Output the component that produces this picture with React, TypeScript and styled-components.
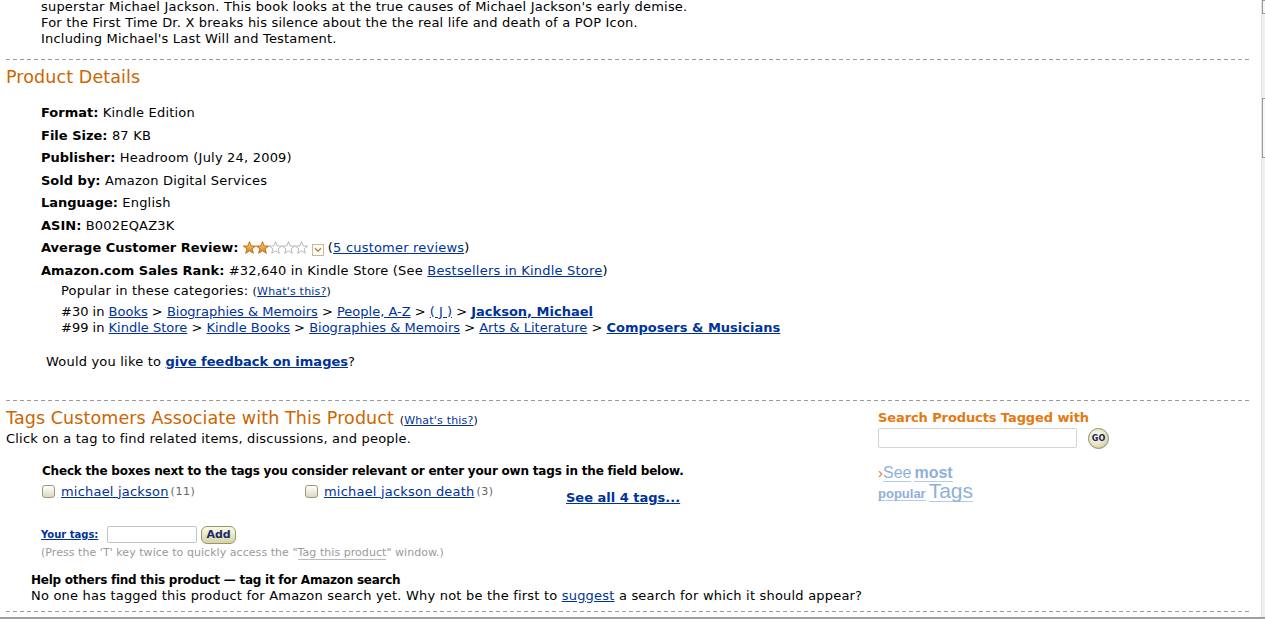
import React from "react";
import styled, { createGlobalStyle } from "styled-components";

const GlobalStyle = createGlobalStyle`
  html, body {
    margin: 0;
    padding: 0;
    background: #fff;
  }
  body {
    font-family: "DejaVu Sans", Verdana, sans-serif;
    font-size: 13px;
    letter-spacing: 0.2px;
    color: #000;
    overflow: hidden;
  }
`;

const LINK = "#003399";

const Page = styled.div`
  padding: 0 14px 0 6px;
`;

const Description = styled.div`
  margin-top: -1px;
  padding-left: 35px;
  line-height: 16px;
`;

const Divider = styled.div<{ $top: number; $bottom: number }>`
  height: 1px;
  margin: ${(p) => p.$top}px 0 ${(p) => p.$bottom}px;
  background-image: repeating-linear-gradient(
    to right,
    #9a9a9a 0 4px,
    transparent 4px 7px
  );
`;

const Heading = styled.h2<{ $top?: number }>`
  margin: ${(p) => p.$top ?? 0}px 0 0;
  font-size: 17.5px;
  line-height: 20px;
  letter-spacing: 0.1px;
  font-weight: normal;
  color: #cc6600;
`;

const Tiny = styled.span`
  font-size: 11px;
  letter-spacing: 0.2px;
  color: #000;
`;

const Link = styled.a<{ $bold?: boolean }>`
  color: ${LINK};
  text-decoration: underline;
  font-weight: ${(p) => (p.$bold ? "bold" : "normal")};
  letter-spacing: ${(p) => (p.$bold ? "0" : "inherit")};
  cursor: pointer;
`;

const Label = styled.b`
  letter-spacing: 0;
`;

const DetailList = styled.ul`
  list-style: none;
  margin: 18px 0 0;
  padding: 0 0 0 35px;
  line-height: 16px;
`;

const DetailItem = styled.li`
  margin-bottom: 6.5px;
`;

const Popular = styled.div`
  margin: 4px 0 0 20px;
`;

const CategoryList = styled.div`
  margin-top: 4px;
  letter-spacing: 0;
`;

const Stars = styled.svg`
  vertical-align: -2px;
  margin-right: 4px;
`;

const DropBox = styled.span`
  display: inline-flex;
  align-items: center;
  justify-content: center;
  width: 10px;
  height: 10px;
  border: 1px solid #c8b89a;
  vertical-align: -1px;
  margin-right: 4px;
  background: #fff;
`;

const Feedback = styled.p`
  margin: 18px 0 0;
  padding-left: 40px;
  line-height: 16px;
`;

const TagsSection = styled.div`
  display: grid;
  grid-template-columns: 872px 1fr;
`;

const Intro = styled.div`
  line-height: 16px;
`;

const CheckTitle = styled.div`
  margin: 16px 0 0 36px;
  font-size: 12px;
  font-weight: bold;
  letter-spacing: -0.2px;
  line-height: 16px;
`;

const TagGrid = styled.div`
  display: grid;
  grid-template-columns: 263px 261px auto;
  margin: 5px 0 0 36px;
  line-height: 16px;
`;

const TagCell = styled.label`
  display: flex;
  align-items: center;
  gap: 6px;
  height: 16px;
`;

const Box = styled.input`
  appearance: none;
  margin: 0;
  width: 13px;
  height: 13px;
  border: 1px solid #9c9a78;
  border-radius: 3px;
  background: linear-gradient(#ffffff, #dcd9bf);
  box-sizing: border-box;
`;

const Count = styled.span`
  font-size: 11px;
  letter-spacing: 0.5px;
  color: #666;
  margin-left: -4px;
`;

const SeeAll = styled(Link)`
  font-size: 13px;
  padding-top: 6px;
  display: inline-block;
`;

const YourTags = styled.div`
  display: flex;
  align-items: center;
  gap: 8px;
  margin: 20px 0 0 35px;
  height: 18px;
`;

const SmallLink = styled(Link)`
  font-size: 10px;
  font-weight: bold;
  letter-spacing: 0;
`;

const TagInput = styled.input`
  width: 90px;
  height: 17px;
  box-sizing: border-box;
  border: 1px solid #c3c3c3;
  border-radius: 2px;
  margin: 0 -4px 0 1px;
  padding: 0;
`;

const PillButton = styled.button`
  height: 18px;
  padding: 0 4px;
  border: 1px solid #98966c;
  border-radius: 6px;
  background: linear-gradient(#fbfbe6, #d6d3a6);
  font-family: "DejaVu Sans", Verdana, sans-serif;
  font-size: 11px;
  font-weight: bold;
  color: #1c2a6b;
  line-height: 14px;
`;

const Hint = styled.div`
  margin: 2px 0 0 35px;
  font-size: 11px;
  letter-spacing: 0.05px;
  line-height: 13px;
  color: #9a9a9a;
`;

const HintLink = styled.span`
  border-bottom: 1px solid #bbb;
`;

const Help = styled.div`
  margin: 14px 0 0 25px;
  line-height: 15px;
`;

const HelpTitle = styled.div`
  font-size: 12px;
  font-weight: bold;
  letter-spacing: -0.25px;
`;

const SearchCol = styled.div`
  padding-top: 8px;
`;

const SearchTitle = styled.div`
  font-size: 13px;
  line-height: 18px;
  font-weight: bold;
  letter-spacing: -0.1px;
  color: #e47911;
`;

const SearchRow = styled.div`
  display: flex;
  align-items: center;
  gap: 11px;
  margin-top: 1px;
`;

const SearchInput = styled.input`
  width: 199px;
  height: 20px;
  box-sizing: border-box;
  border: 1px solid #d4d4d4;
  border-radius: 2px;
  margin: 0;
`;

const GoButton = styled.button`
  width: 21px;
  height: 21px;
  padding: 0;
  border-radius: 50%;
  border: 1px solid #8c8a60;
  background: radial-gradient(circle at 40% 35%, #fdfdf0 0%, #e6e3c0 55%, #bdb98a 100%);
  font-family: "DejaVu Sans", Verdana, sans-serif;
  font-size: 8px;
  font-weight: bold;
  color: #14205a;
`;

const PopularTags = styled.a`
  display: block;
  margin-top: 15px;
  color: #8fb0dc;
  font-family: "Liberation Sans", Arial, sans-serif;
  letter-spacing: 0;
  text-decoration: none;
  cursor: pointer;
`;

const PTLine = styled.div<{ $shift?: number }>`
  display: flex;
  align-items: baseline;
  gap: 3px;
  height: 18px;
  margin-top: ${(p) => p.$shift ?? 0}px;
`;

const PTWord = styled.span<{ $size: number; $bold?: boolean }>`
  font-size: ${(p) => p.$size}px;
  font-weight: ${(p) => (p.$bold ? "bold" : "normal")};
  line-height: 1;
  border-bottom: 1px solid #b7cbe6;
`;

const Chevron = styled.span`
  color: #e47911;
  font-size: 15px;
  margin-right: -3px;
`;

const ScrollStrip = styled.div`
  position: fixed;
  top: 0;
  right: 0;
  width: 3px;
  height: 100%;
  background: #f0f0f0;
  border-left: 1px solid #e2e2e2;
`;

const ScrollThumb = styled.div<{ $top: number; $h: number }>`
  position: absolute;
  left: 0;
  top: ${(p) => p.$top}px;
  width: 3px;
  height: ${(p) => p.$h}px;
  border-left: 1px solid #9a9a9a;
  border-top: 1px solid #9a9a9a;
  border-bottom: 1px solid #9a9a9a;
  box-sizing: border-box;
  background: #f7f7f7;
`;

const BottomEdge = styled.div`
  position: fixed;
  left: 0;
  right: 0;
  bottom: 0;
  height: 2px;
  background: #a0a0a0;
`;

const STAR = "6.5,0.3 8.1,4.6 12.7,4.8 9.1,7.6 10.3,12 6.5,9.5 2.7,12 3.9,7.6 0.3,4.8 4.9,4.6";

const StarRating = ({ filled }: { filled: number }) => (
  <Stars width="65" height="13" viewBox="0 0 65 13">
    <defs>
      <linearGradient id="gold" x1="0" y1="0" x2="0" y2="1">
        <stop offset="0" stopColor="#fcd06a" />
        <stop offset="1" stopColor="#d9801b" />
      </linearGradient>
    </defs>
    {[0, 1, 2, 3, 4].map((i) => (
      <polygon
        key={i}
        points={STAR}
        transform={`translate(${i * 13} 0.3)`}
        fill={i < filled ? "url(#gold)" : "#fff"}
        stroke={i < filled ? "#b86a12" : "#b0b0b0"}
        strokeWidth="0.9"
        strokeLinejoin="round"
      />
    ))}
  </Stars>
);

const details: [string, React.ReactNode][] = [
  ["Format:", "Kindle Edition"],
  ["File Size:", "87 KB"],
  ["Publisher:", "Headroom (July 24, 2009)"],
  ["Sold by:", "Amazon Digital Services"],
  ["Language:", "English"],
  ["ASIN:", "B002EQAZ3K"],
];

export default function App() {
  return (
    <>
      <GlobalStyle />
      <Page>
        <Description>
          superstar Michael Jackson. This book looks at the true causes of Michael Jackson's early demise.
          <br />
          For the First Time Dr. X breaks his silence about the the real life and death of a POP Icon.
          <br />
          Including Michael's Last Will and Testament.
        </Description>

        <Divider $top={12} $bottom={7} />
        <Heading>Product Details</Heading>

        <DetailList>
          {details.map(([label, value]) => (
            <DetailItem key={label}>
              <Label>{label}</Label> {value}
            </DetailItem>
          ))}
          <DetailItem>
            <Label>Average Customer Review:</Label> <StarRating filled={2} />
            <DropBox>
              <svg width="8" height="6" viewBox="0 0 8 6">
                <path d="M1 1.2 L4 4.2 L7 1.2" fill="none" stroke="#d07a1a" strokeWidth="1.4" />
              </svg>
            </DropBox>
            (<Link>5 customer reviews</Link>)
          </DetailItem>
          <DetailItem>
            <Label>Amazon.com Sales Rank:</Label> #32,640 in Kindle Store (See <Link>Bestsellers in Kindle Store</Link>)
            <Popular>
              Popular in these categories: <Tiny>(<Link>What's this?</Link>)</Tiny>
              <CategoryList>
                #30 in <Link>Books</Link> &gt; <Link>Biographies &amp; Memoirs</Link> &gt; <Link>People, A-Z</Link> &gt;{" "}
                <Link>( J )</Link> &gt; <Link $bold>Jackson, Michael</Link>
                <br />
                #99 in <Link>Kindle Store</Link> &gt; <Link>Kindle Books</Link> &gt; <Link>Biographies &amp; Memoirs</Link>{" "}
                &gt; <Link>Arts &amp; Literature</Link> &gt; <Link $bold>Composers &amp; Musicians</Link>
              </CategoryList>
            </Popular>
          </DetailItem>
        </DetailList>

        <Feedback>
          Would you like to <Link $bold>give feedback on images</Link>?
        </Feedback>

        <Divider $top={30} $bottom={0} />

        <TagsSection>
          <div>
            <Heading $top={7}>
              Tags Customers Associate with This Product <Tiny>(<Link>What's this?</Link>)</Tiny>
            </Heading>
            <Intro>Click on a tag to find related items, discussions, and people.</Intro>
            <CheckTitle>Check the boxes next to the tags you consider relevant or enter your own tags in the field below.</CheckTitle>
            <TagGrid>
              <TagCell>
                <Box type="checkbox" />
                <Link>michael jackson</Link>
                <Count>(11)</Count>
              </TagCell>
              <TagCell>
                <Box type="checkbox" />
                <Link>michael jackson death</Link>
                <Count>(3)</Count>
              </TagCell>
              <div>
                <SeeAll $bold>See all 4 tags...</SeeAll>
              </div>
            </TagGrid>
            <YourTags>
              <SmallLink>Your tags:</SmallLink>
              <TagInput type="text" />
              <PillButton>Add</PillButton>
            </YourTags>
            <Hint>
              (Press the 'T' key twice to quickly access the "<HintLink>Tag this product</HintLink>" window.)
            </Hint>
            <Help>
              <HelpTitle>Help others find this product — tag it for Amazon search</HelpTitle>
              No one has tagged this product for Amazon search yet. Why not be the first to <Link>suggest</Link> a
              search for which it should appear?
            </Help>
          </div>

          <SearchCol>
            <SearchTitle>Search Products Tagged with</SearchTitle>
            <SearchRow>
              <SearchInput type="text" />
              <GoButton>GO</GoButton>
            </SearchRow>
            <PopularTags>
              <PTLine>
                <Chevron>›</Chevron>
                <PTWord $size={16}>See</PTWord>
                <PTWord $size={16} $bold>most</PTWord>
              </PTLine>
              <PTLine $shift={-2}>
                <PTWord $size={13} $bold>popular</PTWord>
                <PTWord $size={21}>Tags</PTWord>
              </PTLine>
            </PopularTags>
          </SearchCol>
        </TagsSection>

        <Divider $top={8} $bottom={0} />
      </Page>
      <ScrollStrip>
        <ScrollThumb $top={0} $h={14} />
        <ScrollThumb $top={98} $h={60} />
      </ScrollStrip>
      <BottomEdge />
    </>
  );
}
